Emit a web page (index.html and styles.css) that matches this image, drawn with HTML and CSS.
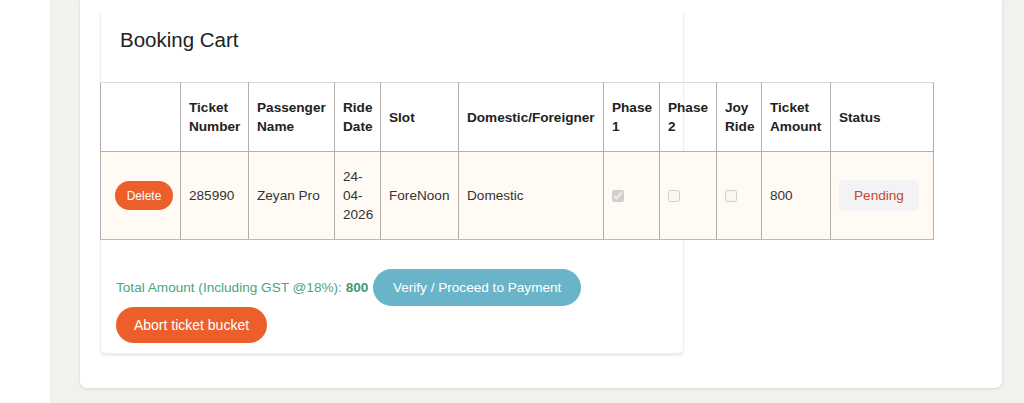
FILE: index.html
```html
<!DOCTYPE html>
<html>
<head>
<meta charset="utf-8">
<link rel="stylesheet" href="styles.css">
</head>
<body>
<div class="layout">
  <aside class="sidebar"></aside>
  <main class="main">
    <section class="panel">
      <div class="card">
        <h2 class="card-title">Booking Cart</h2>
        <table class="cart">
          <colgroup>
            <col style="width:80px"><col style="width:68px"><col style="width:86px"><col style="width:46px"><col style="width:78px"><col style="width:145px"><col style="width:56px"><col style="width:57px"><col style="width:45px"><col style="width:69px"><col style="width:103px">
          </colgroup>
          <thead>
            <tr>
              <th></th>
              <th>Ticket Number</th>
              <th>Passenger Name</th>
              <th>Ride Date</th>
              <th>Slot</th>
              <th>Domestic/Foreigner</th>
              <th>Phase 1</th>
              <th>Phase 2</th>
              <th>Joy Ride</th>
              <th>Ticket Amount</th>
              <th>Status</th>
            </tr>
          </thead>
          <tbody>
            <tr>
              <td class="action"><button class="btn-delete">Delete</button></td>
              <td>285990</td>
              <td>Zeyan Pro</td>
              <td>24-<br>04-<br>2026</td>
              <td>ForeNoon</td>
              <td>Domestic</td>
              <td><input type="checkbox" checked disabled></td>
              <td><input type="checkbox" disabled></td>
              <td><input type="checkbox" disabled></td>
              <td>800</td>
              <td><span class="badge">Pending</span></td>
            </tr>
          </tbody>
        </table>
        <div class="footer"><span class="total">Total Amount (Including GST @18%): <b>800</b></span> <button class="btn btn-verify">Verify / Proceed to Payment</button><button class="btn btn-abort">Abort ticket bucket</button></div>
      </div>
    </section>
  </main>
</div>
</body>
</html>
```
FILE: styles.css
```css
* { box-sizing: border-box; }
html, body { margin: 0; padding: 0; }
body {
  font-family: "Liberation Sans", Arial, sans-serif;
  background: #f2f1ee;
  color: #333;
  width: 1024px;
  height: 403px;
  overflow: hidden;
}
.layout { display: flex; height: 403px; }
.sidebar { width: 50px; background: #fff; flex: none; }
.main { flex: 1; padding: 0 22px 0 30px; }
.panel {
  background: #fff;
  height: 388px;
  border-radius: 0 0 7px 7px;
  box-shadow: 0 1px 3px rgba(0,0,0,0.12);
  padding: 12px 20px 0 20px;
}
.card {
  width: 584px;
  border: 1px solid #f1efec;
  border-top: none;
  border-radius: 0 0 6px 6px;
  box-shadow: 0 2px 2px rgba(0,0,0,0.07);
  padding-bottom: 10px;
}
.card-title {
  margin: 0;
  padding: 16px 19px 0;
  height: 70px;
  font-size: 20.5px;
  font-weight: normal;
  line-height: 24px;
  color: #222;
}
.cart {
  border-collapse: collapse;
  table-layout: fixed;
  width: 833px;
  margin-left: -1px;
  font-size: 13.6px;
  line-height: 19px;
}
.cart th, .cart td {
  border: 1px solid #b3afab;
  padding: 14px 8px;
  text-align: left;
  vertical-align: middle;
}
.cart thead th {
  border-top-color: #e0d8d3;
  font-weight: bold;
  color: #222;
  padding: 15px 8px;
}
.cart tbody tr { background: #fffaf3; }
.cart tbody td { padding: 15px 8px; color: #333; border-bottom-color: #bdb9b5; }
.cart td.action { padding-left: 14px; }
.cart input[type=checkbox] { margin: 0; width: 12px; height: 12px; vertical-align: middle; }
.btn-delete {
  border: none;
  background: #ec5f2a;
  color: #fff;
  font-family: inherit;
  font-size: 12px;
  height: 29px;
  width: 58px;
  border-radius: 15px;
  padding: 0;
}
.badge {
  display: inline-block;
  background: #f3f3f3;
  color: #c4482b;
  width: 80px;
  height: 31px;
  line-height: 31px;
  text-align: center;
  border-radius: 5px;
}
.footer {
  padding: 29px 15px 0;
  font-size: 13.6px;
}
.total { color: #4aa582; }
.total b { color: #3f9872; }
.btn {
  display: inline-block;
  border: none;
  color: #fff;
  font-family: inherit;
  font-size: 13.6px;
  height: 37px;
  border-radius: 19px;
  vertical-align: middle;
  padding: 0;
}
.btn-verify { background: #6ab4ca; width: 208px; margin-left: 1px; margin-bottom: 1px; }
.btn-abort { background: #ec5f2a; width: 151px; height: 36px; font-size: 14px; }
```
